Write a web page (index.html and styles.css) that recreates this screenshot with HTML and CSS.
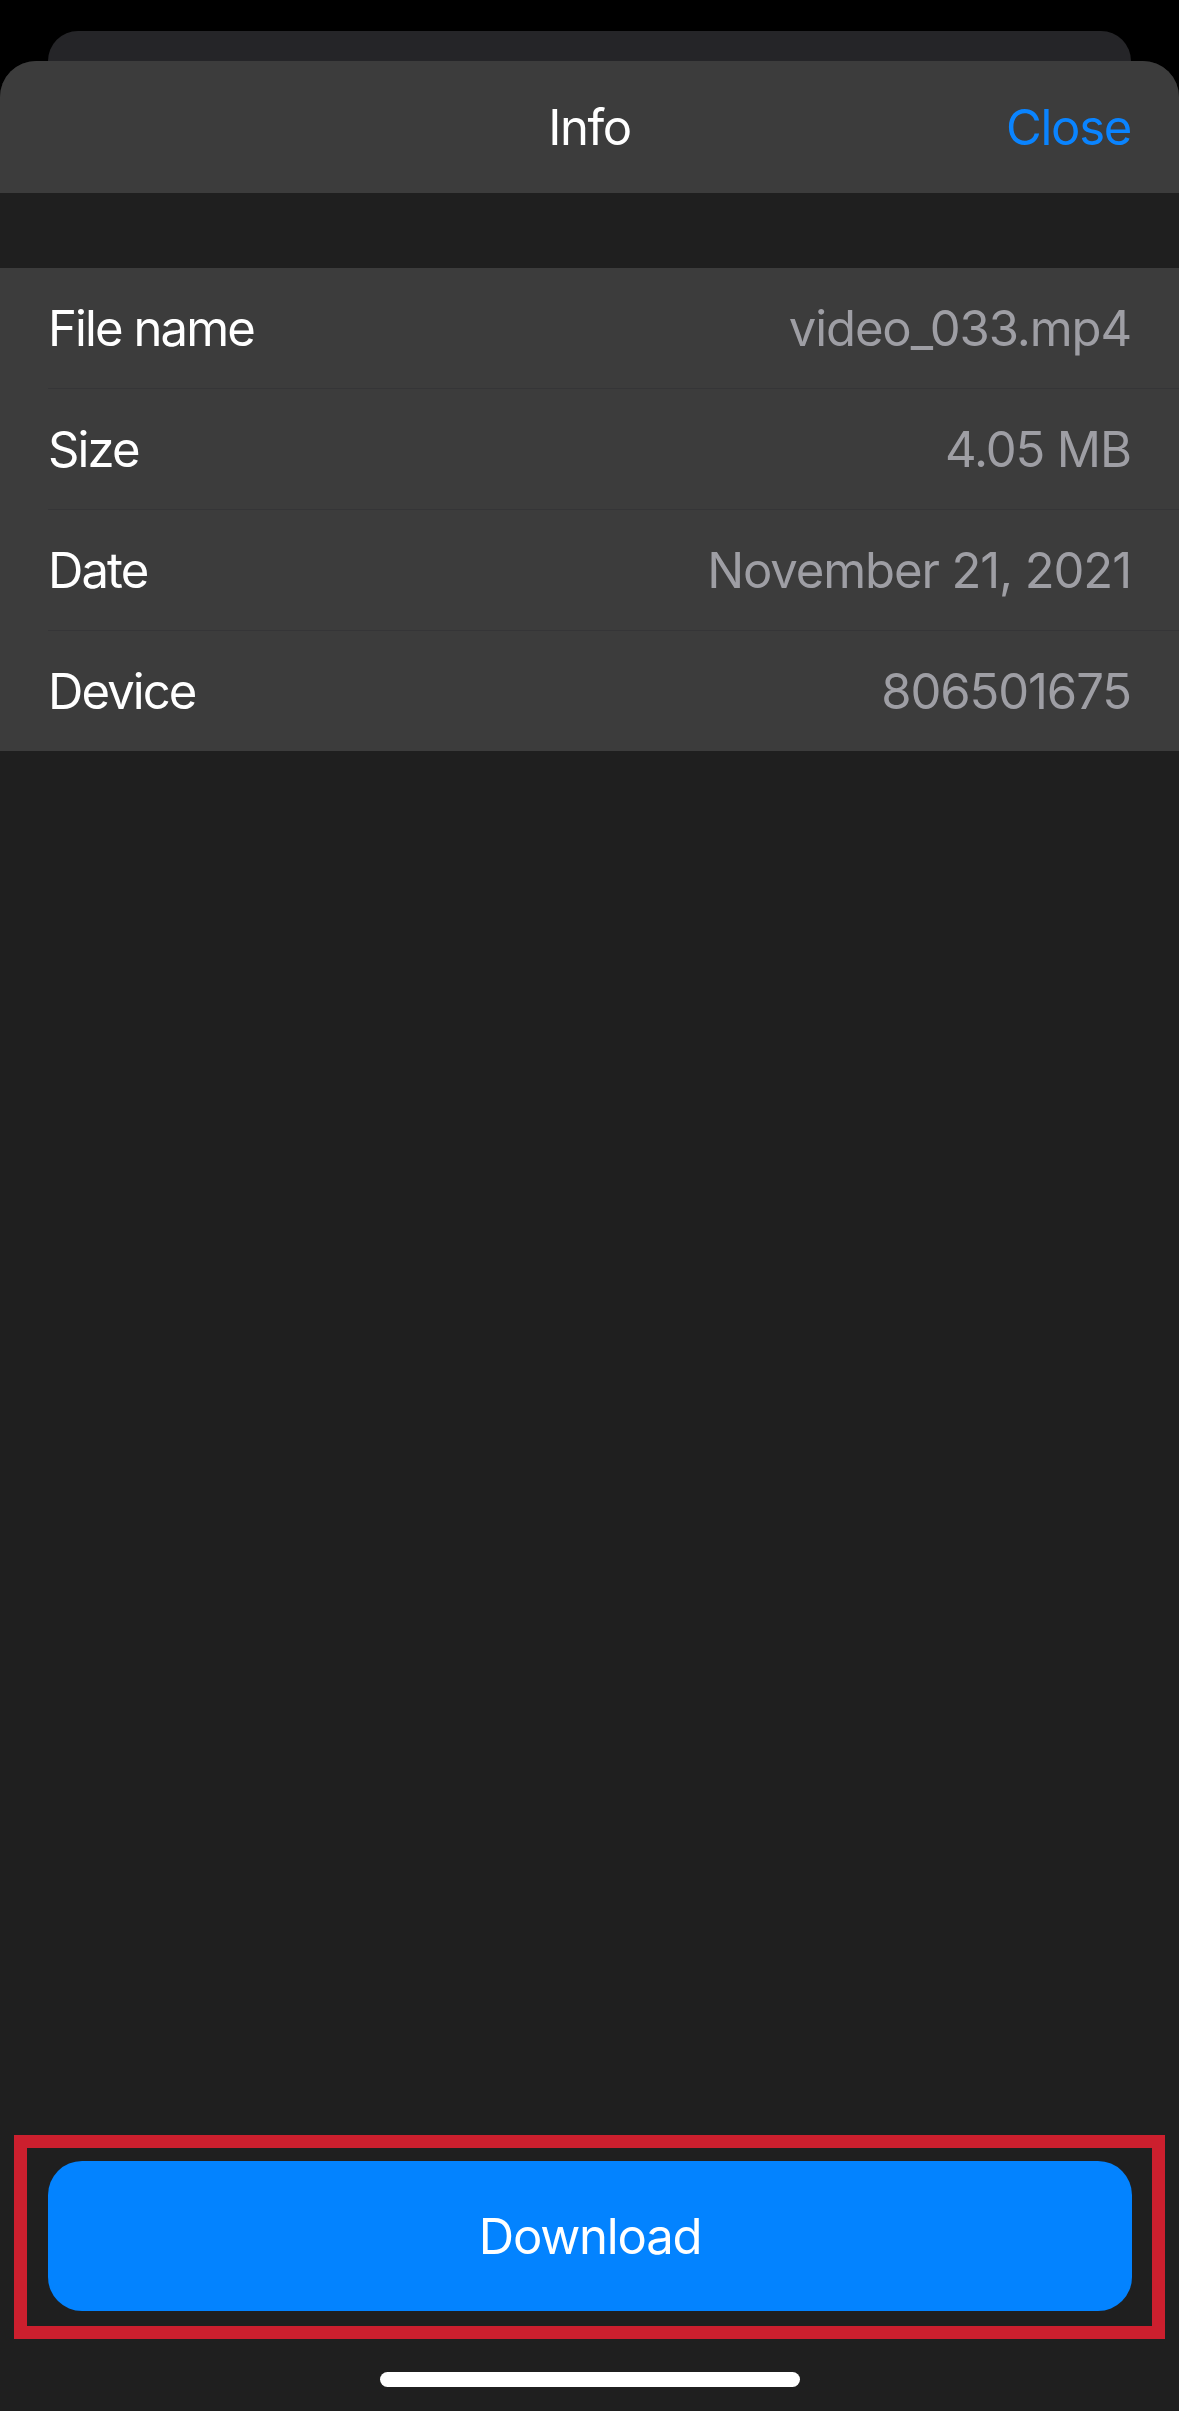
FILE: index.html
```html
<!DOCTYPE html>
<html lang="en">
<head>
<meta charset="utf-8">
<title>Info</title>
<link rel="stylesheet" href="styles.css">
</head>
<body>
<div class="screen">
  <div class="back-card"></div>
  <div class="sheet">
    <header class="nav">
      <div class="nav-title">Info</div>
      <div class="nav-close">Close</div>
    </header>
    <div class="gap"></div>
    <ul class="list">
      <li class="row"><span class="label">File name</span><span class="value">video_033.mp4</span></li>
      <li class="row"><span class="label">Size</span><span class="value">4.05 MB</span></li>
      <li class="row"><span class="label">Date</span><span class="value">November 21, 2021</span></li>
      <li class="row"><span class="label">Device</span><span class="value">806501675</span></li>
    </ul>
    <div class="spacer"></div>
    <div class="highlight">
      <button class="download">Download</button>
    </div>
    <div class="home-area"><div class="home-indicator"></div></div>
  </div>
</div>
</body>
</html>
```
FILE: styles.css
```css
* { box-sizing: border-box; }
html, body {
  margin: 0;
  padding: 0;
  background: #000;
}
body {
  font-family: Inter, "Noto Sans", "Liberation Sans", sans-serif;
  -webkit-font-smoothing: antialiased;
}
.screen {
  width: 1179px;
  height: 2411px;
  display: flex;
  flex-direction: column;
  padding-top: 31px;
  overflow: hidden;
}
.back-card {
  height: 30px;
  margin: 0 48px;
  background: #252528;
  border-radius: 30px 30px 0 0;
  flex: none;
}
.sheet {
  flex: 1;
  display: flex;
  flex-direction: column;
  background: #1f1f1f;
  border-radius: 36px 36px 0 0;
  overflow: hidden;
}
.nav {
  height: 132px;
  flex: none;
  background: #3c3c3c;
  display: flex;
  align-items: center;
  justify-content: center;
  position: relative;
  padding: 0 48px;
}
.nav-title {
  color: #fff;
  font-size: 49px;
  letter-spacing: -1.4px;
}
.nav-close {
  position: absolute;
  right: 48px;
  top: 0;
  height: 132px;
  display: flex;
  align-items: center;
  color: #0a84ff;
  font-size: 49px;
  letter-spacing: -1.3px;
}
.gap {
  height: 75px;
  flex: none;
}
.list {
  list-style: none;
  margin: 0;
  padding: 0 0 0 48px;
  background: #3c3c3c;
  flex: none;
}
.row {
  height: 121px;
  padding-right: 48px;
  display: flex;
  align-items: center;
  justify-content: space-between;
  border-bottom: 1px solid #353537;
  font-size: 49px;
}
.row:last-child {
  border-bottom: none;
  height: 120px;
}
.label { color: #fff; letter-spacing: -1.9px; }
.value { color: #9e9ea4; letter-spacing: -1.1px; }
.spacer { flex: 1; }
.highlight {
  flex: none;
  margin: 0 14px;
  border: 13px solid #cc1f2e;
  padding: 13px 20px 15px 21px;
}
.download {
  display: block;
  width: 100%;
  height: 150px;
  border: none;
  border-radius: 34px;
  background: #0383ff;
  color: #fff;
  font-family: inherit;
  font-size: 49px;
  letter-spacing: -1.2px;
  padding: 0;
}
.home-area {
  flex: none;
  height: 72px;
  padding-top: 33px;
  display: flex;
  justify-content: center;
}
.home-indicator {
  width: 420px;
  height: 15px;
  border-radius: 8px;
  background: #fff;
}
```
